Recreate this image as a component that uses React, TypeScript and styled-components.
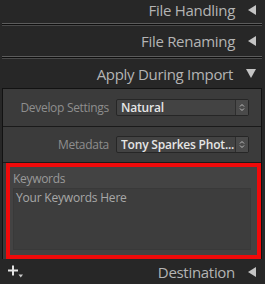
import styled, { createGlobalStyle } from "styled-components";

const Global = createGlobalStyle`
  html, body {
    margin: 0;
    padding: 0;
    background: #272727;
  }
  body {
    font-family: "Open Sans", "Liberation Sans", sans-serif;
  }
`;

const Wrapper = styled.div`
  width: 265px;
  height: 284px;
  overflow: hidden;
  background: #272727;
  display: flex;
  flex-direction: column;
`;

const Header = styled.div<{ h: number; lift?: number }>`
  height: ${(p) => p.h}px;
  box-sizing: border-box;
  padding-bottom: ${(p) => p.lift || 0}px;
  display: flex;
  align-items: center;
  justify-content: flex-end;
  padding-right: 9px;
  gap: 13px;
  color: #b4b4b4;
  font-size: 15px;
  letter-spacing: -0.3px;
`;

const Triangle = styled.span<{ down?: boolean }>`
  width: 0;
  height: 0;
  ${(p) =>
    p.down
      ? `border-left: 5px solid transparent;
         border-right: 5px solid transparent;
         border-top: 9px solid #c4c4c4;`
      : `border-top: 5px solid transparent;
         border-bottom: 5px solid transparent;
         border-right: 8px solid #c4c4c4;`}
`;

const Collapsed = styled.div`
  margin: 0 3px 0 2px;
  height: 1px;
  background: #0e0e0e;
  border-top: 1px solid #5c5c5c;
  border-bottom: 1px solid #4a4a4a;
`;

const Panel = styled.div`
  margin: 0 3px 0 2px;
  border: 1px solid #121212;
  border-bottom: none;
  background: #3b3b3b;
  display: flex;
  flex-direction: column;
`;

const Row = styled.div<{ h: number }>`
  height: ${(p) => p.h}px;
  display: flex;
  align-items: center;
  justify-content: flex-end;
  padding-right: 12px;
  gap: 7px;
  border-bottom: 1px solid #1a1a1a;
`;

const Label = styled.span`
  color: #8e8e8e;
  font-size: 12px;
  letter-spacing: -0.3px;
`;

const Select = styled.div`
  width: 133px;
  height: 17px;
  box-sizing: border-box;
  border: 1px solid #262626;
  border-radius: 2px;
  background: #434343;
  display: flex;
  align-items: center;
  color: #e6e6e6;
  font-size: 12px;
  font-weight: 600;
  letter-spacing: -0.2px;
  padding-left: 4px;
`;

const SelectText = styled.span`
  flex: 1;
  white-space: nowrap;
  overflow: hidden;
`;

const Stepper = styled.span`
  width: 12px;
  height: 15px;
  border-left: 1px solid #2e2e2e;
  background: #4a4a4a;
  display: flex;
  align-items: center;
  justify-content: center;
`;

const Keywords = styled.div`
  margin-left: 3px;
  height: 96px;
  box-sizing: border-box;
  border: 4px solid #f00a0a;
  background: #434343;
  padding: 4px 6px 5px 3px;
  display: flex;
  flex-direction: column;
  gap: 1px;
`;

const KeyLabel = styled.span`
  color: #9a9a9a;
  font-size: 12px;
  letter-spacing: -0.3px;
  line-height: 16px;
`;

const TextBox = styled.div`
  flex: 1;
  background: #3d3d3d;
  border: 1px solid #393939;
  color: #a8a8a8;
  font-size: 12px;
  letter-spacing: -0.2px;
  padding: 1px 2px;
  line-height: 16px;
`;

const Footer = styled.div`
  flex: 1;
  display: flex;
  align-items: center;
  padding: 0 9px 0 7px;
  gap: 13px;
  color: #b4b4b4;
  font-size: 15px;
  letter-spacing: -0.3px;
`;

const Plus = styled.span`
  flex: 1;
  display: flex;
`;

function StepIcon() {
  return (
    <svg width="6" height="9" viewBox="0 0 6 9">
      <path d="M1 3.5 L3 1.5 L5 3.5 M1 5.5 L3 7.5 L5 5.5" stroke="#bdbdbd" strokeWidth="1" fill="none" />
    </svg>
  );
}

function PlusIcon() {
  return (
    <svg width="17" height="15" viewBox="0 0 17 15">
      <path d="M6 1.5 V11.5 M1 6.5 H11" stroke="#e4e4e4" strokeWidth="2" />
      <path d="M11.5 10.5 H16 L13.75 13.5 Z" fill="#c8c8c8" />
    </svg>
  );
}

export default function App() {
  return (
    <Wrapper>
      <Global />
      <Header h={23} lift={4}>
        File Handling <Triangle />
      </Header>
      <Collapsed />
      <Header h={30}>
        File Renaming <Triangle />
      </Header>
      <Collapsed />
      <Header h={29}>
        Apply During Import <Triangle down />
      </Header>
      <Panel>
        <Row h={37}>
          <Label>Develop Settings</Label>
          <Select>
            <SelectText>Natural</SelectText>
            <Stepper>
              <StepIcon />
            </Stepper>
          </Select>
        </Row>
        <Row h={35}>
          <Label>Metadata</Label>
          <Select>
            <SelectText>Tony Sparkes Phot...</SelectText>
            <Stepper>
              <StepIcon />
            </Stepper>
          </Select>
        </Row>
        <Keywords>
          <KeyLabel>Keywords</KeyLabel>
          <TextBox>Your Keywords Here</TextBox>
        </Keywords>
      </Panel>
      <Footer>
        <Plus>
          <PlusIcon />
        </Plus>
        Destination <Triangle />
      </Footer>
    </Wrapper>
  );
}
